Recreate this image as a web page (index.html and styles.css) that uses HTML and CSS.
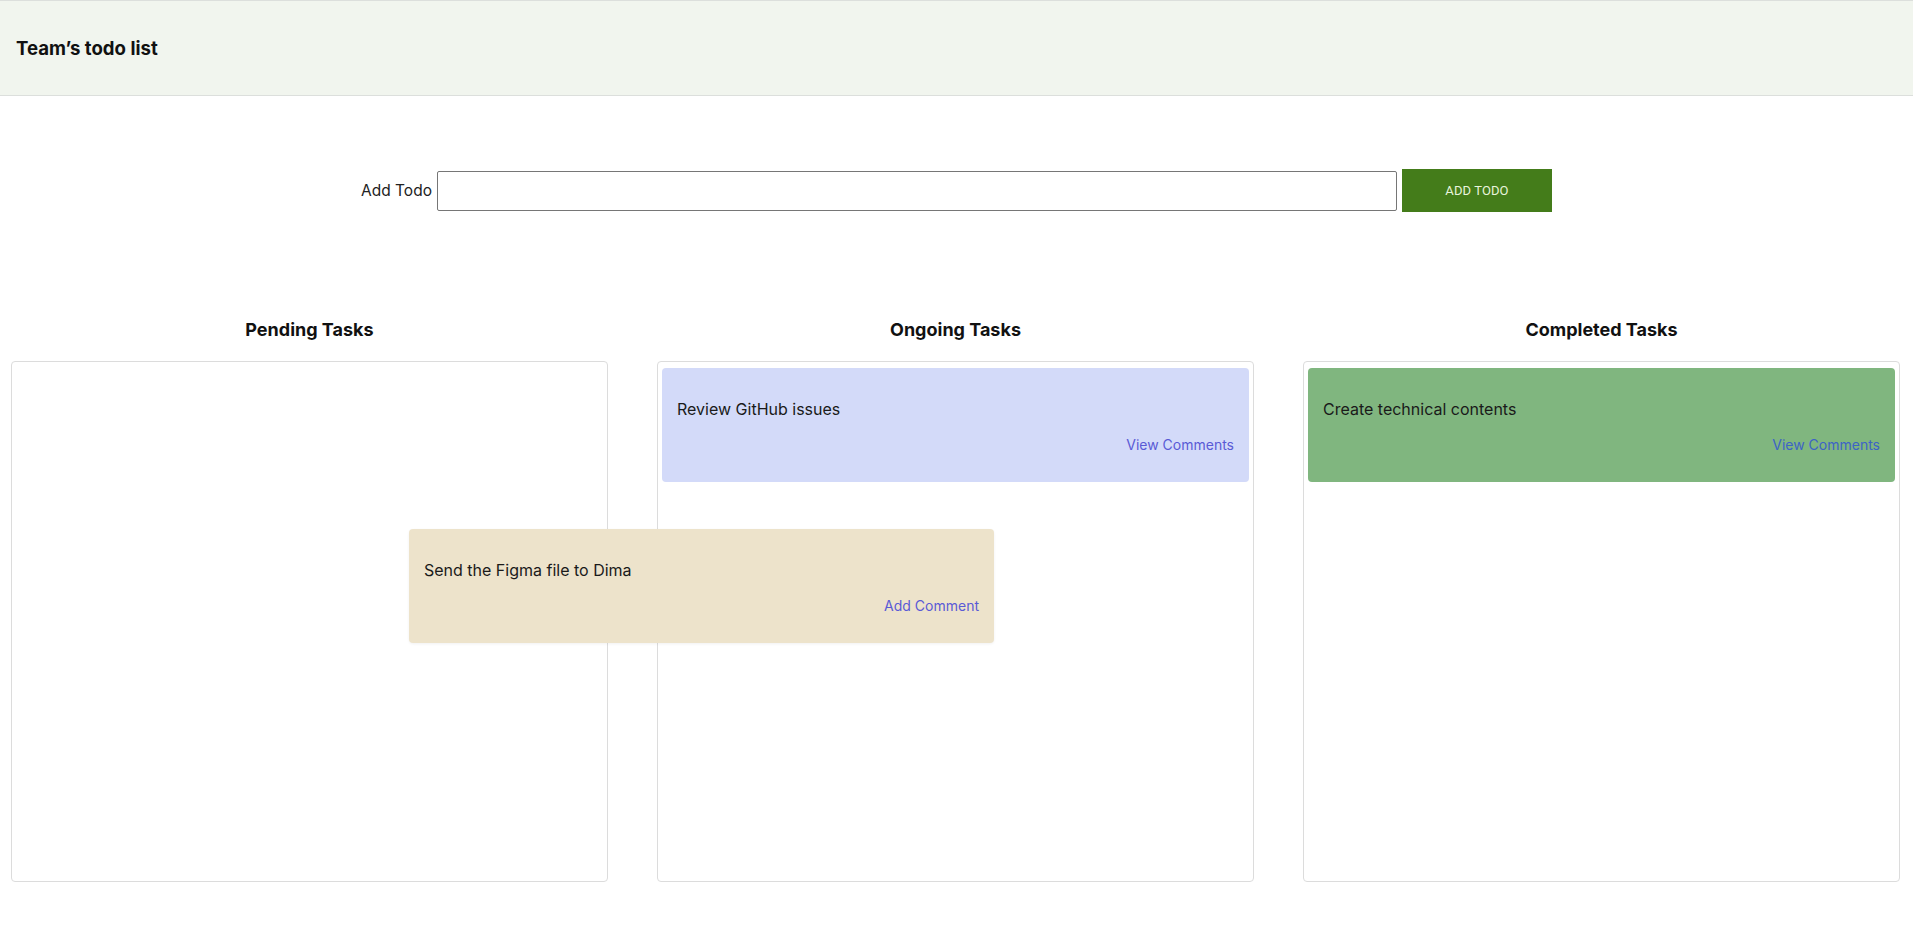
FILE: index.html
```html
<!DOCTYPE html>
<html lang="en">
<head>
<meta charset="utf-8">
<title>Team's todo list</title>
<link rel="stylesheet" href="styles.css">
</head>
<body>
<header class="navbar">
  <h3 class="brand">Team’s todo list</h3>
</header>
<main class="page">
  <form class="add-form">
    <label class="add-label" for="todo">Add Todo</label>
    <input class="add-input" id="todo" type="text">
    <button class="add-btn" type="button">ADD TODO</button>
  </form>
  <section class="board">
    <div class="column">
      <h3 class="column-title">Pending Tasks</h3>
      <div class="column-box"></div>
    </div>
    <div class="column">
      <h3 class="column-title">Ongoing Tasks</h3>
      <div class="column-box">
        <div class="card card-ongoing">
          <p class="card-text">Review GitHub issues</p>
          <a class="card-link" href="#">View Comments</a>
        </div>
      </div>
    </div>
    <div class="column">
      <h3 class="column-title">Completed Tasks</h3>
      <div class="column-box">
        <div class="card card-completed">
          <p class="card-text">Create technical contents</p>
          <a class="card-link card-link-green" href="#">View Comments</a>
        </div>
      </div>
    </div>
  </section>
  <div class="card card-pending card-dragging">
    <p class="card-text">Send the Figma file to Dima</p>
    <a class="card-link" href="#">Add Comment</a>
  </div>
</main>
</body>
</html>
```

FILE: styles.css
```css
* { box-sizing: border-box; }

html, body {
  margin: 0;
  padding: 0;
  background: #ffffff;
  font-family: "Inter", "Noto Sans", sans-serif;
  color: #111;
}

.navbar {
  height: 96px;
  background: #f1f5ee;
  border-top: 1px solid #dcdfdc;
  border-bottom: 1px solid #dcdfdc;
  display: flex;
  align-items: center;
  padding: 0 16px;
}

.brand {
  margin: 0;
  font-size: 18.6px;
  font-weight: 700;
}

.page {
  position: relative;
  height: 850px;
}

.add-form {
  display: flex;
  align-items: center;
  justify-content: center;
  padding-top: 73px;
  gap: 5px;
}

.add-label {
  font-size: 15.5px;
  color: #222;
}

.add-input {
  width: 960px;
  height: 40px;
  border: 1px solid #767676;
  border-radius: 2px;
  background: #fff;
  padding: 0 6px;
  font: inherit;
}

.add-btn {
  width: 150px;
  height: 43px;
  background: #447c1a;
  color: #e8f4dc;
  border: none;
  font-family: "Roboto", sans-serif;
  font-size: 13px;
  letter-spacing: 0.1px;
}

.board {
  display: grid;
  grid-template-columns: repeat(3, 1fr);
  gap: 49px;
  padding: 0 13px 0 11px;
  margin-top: 107px;
}

.column-title {
  margin: 0 0 20px;
  text-align: center;
  font-size: 18px;
  font-weight: 700;
  line-height: 22px;
}

.column-box {
  height: 521px;
  border: 1px solid #dcdcdc;
  border-radius: 4px;
  padding: 6px 4px;
}

.card {
  border-radius: 4px;
  padding: 31px 12px 28px 12px;
  display: flex;
  flex-direction: column;
  height: 114px;
}

.card-ongoing { background: #d3daf9; }
.card-completed { background: #80b67f; }
.card-pending { background: #ede3cb; }

.card-text {
  margin: 0 0 17px;
  font-size: 16px;
  line-height: 20px;
  color: #1a1a1a;
  padding-left: 3px;
}

.card-link {
  align-self: flex-end;
  font-size: 14px;
  line-height: 18px;
  color: #5a5ad6;
  text-decoration: none;
  padding-right: 3px;
}

.card-link-green { color: #3d63c6; }

.card-dragging {
  position: absolute;
  left: 409px;
  top: 433px;
  width: 585px;
  box-shadow: 0 1px 3px rgba(0, 0, 0, 0.06);
}
```
